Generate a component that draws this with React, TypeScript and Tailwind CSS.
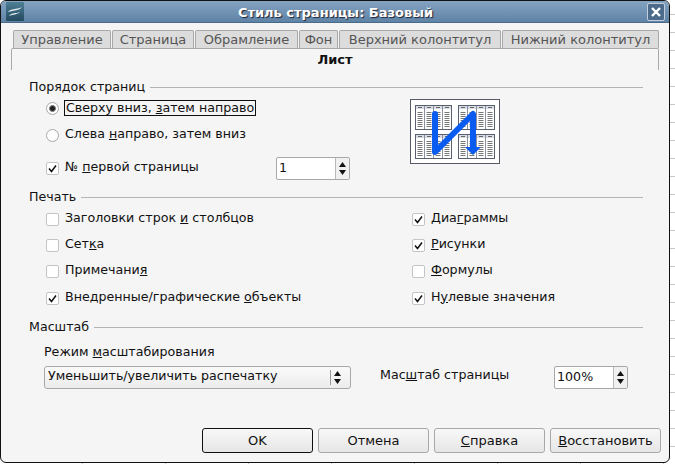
import React from 'react';

/* Page style dialog (GTK look) */

function Check({ on }: { on?: boolean }) {
  return (
    <span className="flex h-[13px] w-[13px] shrink-0 items-center justify-center rounded-[2px] border border-[#c4c4c4] bg-white">
      {on && (
        <svg width="9" height="9" viewBox="0 0 9 9">
          <path d="M1 4.5 L3.5 7.5 L8 1.5" fill="none" stroke="#111" strokeWidth="1.5" />
        </svg>
      )}
    </span>
  );
}

function Radio({ on }: { on?: boolean }) {
  return (
    <span className="flex h-[13px] w-[13px] shrink-0 items-center justify-center rounded-full border border-[#a8a8a8] bg-white">
      {on && <span className="h-[7px] w-[7px] rounded-full border border-[#777] bg-[#222]" />}
    </span>
  );
}

function Tab({ label, w }: { label: string; w: string }) {
  return (
    <div className={`flex h-[18px] items-center justify-center rounded-t-[2px] border border-b-0 border-[#a8a8a8] bg-[#dcdcdc] text-[13px] text-[#555] ${w}`}>
      {label}
    </div>
  );
}

function Section({ title, children }: { title: string; children: React.ReactNode }) {
  return (
    <div>
      <div className="flex h-[16px] items-center gap-[5px]">
        <span>{title}</span>
        <span className="h-px flex-1 bg-[#b4b4b4]" />
      </div>
      {children}
    </div>
  );
}

function Row({ on, children }: { on?: boolean; children: React.ReactNode }) {
  return (
    <div className="flex h-[26.3px] items-center gap-[6px]">
      <Check on={on} />
      <span className="pb-[2px]">{children}</span>
    </div>
  );
}

function Spin({ value, w }: { value: string; w: string }) {
  return (
    <div className={`flex h-[23px] overflow-hidden rounded-[2px] border border-[#a8a8a8] bg-white ${w}`}>
      <div className="flex flex-1 items-center pl-[2px]">{value}</div>
      <div className="flex w-[14px] flex-col items-center justify-center gap-[3px] border-l border-[#b8b8b8] bg-[#f0f0f0]">
        <svg width="7" height="5" viewBox="0 0 7 5"><path d="M3.5 0 L7 5 L0 5 Z" fill="#111" /></svg>
        <svg width="7" height="5" viewBox="0 0 7 5"><path d="M0 0 L7 0 L3.5 5 Z" fill="#111" /></svg>
      </div>
    </div>
  );
}

function Btn({ def, children }: { def?: boolean; children: React.ReactNode }) {
  return (
    <button
      className={`flex h-[25px] w-[111px] items-center justify-center rounded-[3px] border bg-gradient-to-b from-[#f8f8f8] to-[#e6e6e6] text-[13px] ${
        def ? 'border-[#111]' : 'border-[#a8a8a8]'
      }`}
    >
      {children}
    </button>
  );
}

function MiniSheet() {
  const cols = [0, 1, 2, 3];
  return (
    <g>
      <rect x="0.5" y="0.5" width="36" height="24" fill="#fff" stroke="#5a6070" />
      <rect x="1" y="1" width="35" height="3" fill="#d8dce4" />
      {cols.map((c) => (
        <g key={c}>
          {c > 0 && <path d={`M${c * 9 + 0.5} 1 V24`} stroke="#8a909c" />}
          <path d={`M${c * 9 + 3} 2.5 h4`} stroke="#666" />
          {[7, 9, 11, 13, 15, 17, 19, 21].map((y) => (
            <path key={y} d={`M${c * 9 + 2.5} ${y + 0.5} h5`} stroke="#777" />
          ))}
        </g>
      ))}
    </g>
  );
}

function OrderPreview() {
  return (
    <div className="flex h-[65px] w-[90px] items-center justify-center border border-[#555a66] bg-white">
      <svg width="82" height="56" viewBox="0 0 82 56">
        <g transform="translate(1 1)"><MiniSheet /></g>
        <g transform="translate(44 1)"><MiniSheet /></g>
        <g transform="translate(1 30)"><MiniSheet /></g>
        <g transform="translate(44 30)"><MiniSheet /></g>
        <path
          d="M21 10 V48 L59 10 V46"
          fill="none"
          stroke="#0a5cf0"
          strokeWidth="6"
          strokeLinejoin="round"
          strokeLinecap="round"
        />
        <path d="M51 43 H67 L59 51 Z" fill="#0a5cf0" />
      </svg>
    </div>
  );
}

export default function App() {
  return (
    <div className="h-[464px] w-[675px] overflow-hidden bg-white bg-[repeating-linear-gradient(to_bottom,transparent_0,transparent_14px,#c8c8c8_14px,#c8c8c8_15px,transparent_15px,transparent_18px),repeating-linear-gradient(to_right,transparent_0,transparent_82px,#c8c8c8_82px,#c8c8c8_83px)] font-['DejaVu_Sans',sans-serif] text-[12.65px] leading-none text-[#111]">
      <div className="flex h-[463px] w-[670px] flex-col overflow-hidden rounded-[6px] border border-[#111] bg-[#f5f5f5]">
        {/* title bar */}
        <div className="flex h-[22px] shrink-0 items-center justify-between border-b border-[#4a6a8a] bg-gradient-to-b from-[#85a3c2] to-[#5f83a6] pl-[5px] pr-[4px]">
          <span className="flex h-[19px] w-[18px] items-center justify-center rounded-[1px] bg-gradient-to-b from-[#4f7f96] to-[#234a60]">
            <svg width="16" height="12" viewBox="0 0 16 12">
              <path d="M1 6 C4 2 9 4 15 1 C12 5 7 4 1 6 Z M2 10 C5 6 9 8 13 6 C10 9 6 8 2 10 Z" fill="#e6eef2" />
            </svg>
          </span>
          <span className="pt-[1px] text-[13px] font-bold text-white [text-shadow:1px_1px_1px_#223]">Стиль страницы: Базовый</span>
          <span className="flex h-[18px] w-[18px] items-center justify-center rounded-[2px] border border-[#c0d0e0] bg-[#4d6b8a]">
            <svg width="10" height="10" viewBox="0 0 10 10">
              <path d="M1 1 L9 9 M9 1 L1 9" stroke="#fff" strokeWidth="2.4" />
            </svg>
          </span>
        </div>

        {/* tabs */}
        <div className="flex flex-1 flex-col px-[10px] pt-[7px]">
          <div className="flex gap-[1px] pl-[2px]">
            <Tab label="Управление" w="w-[98px]" />
            <Tab label="Страница" w="w-[82px]" />
            <Tab label="Обрамление" w="w-[103px]" />
            <Tab label="Фон" w="w-[39px]" />
            <Tab label="Верхний колонтитул" w="w-[162px]" />
            <Tab label="Нижний колонтитул" w="w-[157px]" />
          </div>
          <div className="flex h-[22px] w-[648px] items-center justify-center rounded-t-[2px] border-x border-t border-[#a8a8a8] text-[13px] font-bold">
            Лист
          </div>

          <div className="pl-[18px] pr-[16px] pt-[9px]">
            <Section title="Порядок страниц">
              <div className="flex">
                <div className="-mt-[1px] w-[381px] pl-[17px]">
                  <div className="flex h-[27px] items-center gap-[5px] pt-[1px]">
                    <Radio on />
                    <span className="border border-[#111] py-[1px] pl-px pr-px">
                      Сверху вниз, <u>з</u>атем направо
                    </span>
                  </div>
                  <div className="mt-[1px] flex h-[27px] items-center gap-[6px]">
                    <Radio />
                    <span className="pb-[2px]">
                      Слева <u>н</u>аправо, затем вниз
                    </span>
                  </div>
                  <div className="flex h-[38px] items-center">
                    <Check on />
                    <span className="ml-[6px] w-[211px] pb-[2px]">
                      № <u>п</u>ервой страницы
                    </span>
                    <Spin value="1" w="w-[74px]" />
                  </div>
                </div>
                <div className="pt-[4px]">
                  <OrderPreview />
                </div>
              </div>
            </Section>

            <div className="mt-[2px]">
              <Section title="Печать">
                <div className="flex pt-[1px]">
                  <div className="w-[383px] pl-[17px]">
                    <Row>
                      Заголовки строк <u>и</u> столбцов
                    </Row>
                    <Row>
                      Сет<u>к</u>а
                    </Row>
                    <Row>
                      Примечани<u>я</u>
                    </Row>
                    <Row on>
                      Внедренные/графические <u>о</u>бъекты
                    </Row>
                  </div>
                  <div>
                    <Row on>
                      Диа<u>г</u>раммы
                    </Row>
                    <Row on>
                      <u>Р</u>исунки
                    </Row>
                    <Row>
                      <u>Ф</u>ормулы
                    </Row>
                    <Row on>
                      Н<u>у</u>левые значения
                    </Row>
                  </div>
                </div>
              </Section>
            </div>

            <div className="mt-[8px]">
              <Section title="Масштаб">
                <div className="pl-[15px] pt-[11px]">
                  <div className="h-[20px]">
                    Режим <u>м</u>асштабирования
                  </div>
                  <div className="flex items-center">
                    <div className="flex h-[23px] w-[307px] items-center justify-between rounded-[3px] border border-[#a8a8a8] bg-gradient-to-b from-[#fafafa] to-[#ececec] pl-[3px] pr-[8px]">
                      <span className="pb-[2px]">Уменьшить/увеличить распечатку</span>
                      <span className="flex h-[15px] items-center border-l border-[#999] pl-[2px]">
                        <svg width="9" height="13" viewBox="0 0 9 13">
                          <path d="M4.5 0 L8 5 L1 5 Z M1 8 L8 8 L4.5 13 Z" fill="#111" />
                        </svg>
                      </span>
                    </div>
                    <span className="ml-[29px] w-[174px] pb-[4px]">
                      Мас<u>ш</u>таб страницы
                    </span>
                    <Spin value="100%" w="w-[74px]" />
                  </div>
                </div>
              </Section>
            </div>
          </div>

          <div className="-mr-[2px] mt-auto flex justify-end gap-[5px] pb-[9px]">
            <Btn def>OK</Btn>
            <Btn>Отмена</Btn>
            <Btn>
              <u>С</u>правка
            </Btn>
            <Btn>
              <u>В</u>осстановить
            </Btn>
          </div>
        </div>
      </div>
    </div>
  );
}
